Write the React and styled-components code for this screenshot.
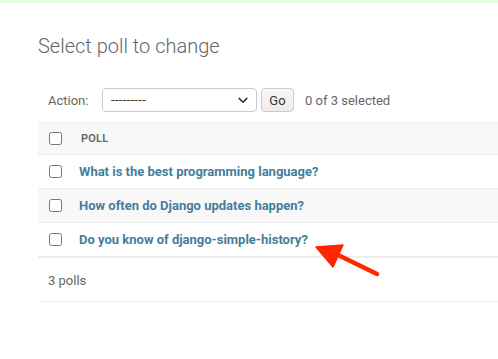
import React from 'react';
import styled, { createGlobalStyle } from 'styled-components';

const polls = [
    "What is the best programming language?",
    "How often do Django updates happen?",
    "Do you know of django-simple-history?",
]

export default function App(){

    return(
        <>
        <GlobalStyle/>
        <TopBar/>
        <Content>
            <Title>Select poll to change</Title>

            <Actions>
                <ActionLabel>Action:</ActionLabel>
                <SelectBox>
                    <span>---------</span>
                    <svg width="10" height="7" viewBox="0 0 10 7">
                        <path d="M1.2 1.4 L5 5.2 L8.8 1.4" fill="none" stroke="#333" strokeWidth="1.6" strokeLinecap="round" strokeLinejoin="round"/>
                    </svg>
                </SelectBox>
                <GoButton>Go</GoButton>
                <Counter>0 of 3 selected</Counter>
            </Actions>

            <Table>
                <thead>
                    <tr>
                        <CheckCell as="th" head><Check type="checkbox"/></CheckCell>
                        <HeadCell>Poll</HeadCell>
                    </tr>
                </thead>
                <tbody>
                    {polls.map((p, index) =>
                        <Row key={index} alt={index % 2 === 1}>
                            <CheckCell><Check type="checkbox"/></CheckCell>
                            <Cell><PollLink href="#">{p}</PollLink></Cell>
                        </Row>
                    )}
                </tbody>
            </Table>

            <Paginator>3 polls</Paginator>
        </Content>

        <Arrow width="80" height="40" viewBox="0 0 80 40">
            <path d="M67 34 L24 13" stroke="#ff2600" strokeWidth="4.5" strokeLinecap="round"/>
            <polygon points="6,7 33,5 23,27" fill="#ff2600" stroke="#ff2600" strokeWidth="1.5" strokeLinejoin="round"/>
        </Arrow>
        </>
    )

}

const GlobalStyle = createGlobalStyle`
    body {
        margin: 0;
        background: #fff;
        font-family: Roboto, "Liberation Sans", sans-serif;
        color: #333;
        overflow: hidden;
        position: relative;
    }
`

const TopBar = styled.div`
    height: 3px;
    background: #dfffdf;
`

const Content = styled.div`
    padding: 0 0 0 38px;
`

const Title = styled.h1`
    margin: 0;
    padding-top: 31px;
    font-size: 20px;
    font-weight: 300;
    line-height: 24px;
    color: #666;
`

const Actions = styled.div`
    display: flex;
    align-items: center;
    margin-top: 30px;
    height: 24px;
    padding-left: 10px;
    font-size: 13px;
    color: #666;
`

const ActionLabel = styled.span`
    width: 54px;
`

const SelectBox = styled.div`
    box-sizing: border-box;
    width: 155px;
    height: 24px;
    border: 1px solid #ccc;
    border-radius: 4px;
    display: flex;
    align-items: center;
    justify-content: space-between;
    padding: 0 8px 0 8px;
    color: #333;
    font-size: 13px;
    letter-spacing: 0.3px;
    span{
        margin-top: -2px;
    }
`

const GoButton = styled.div`
    box-sizing: border-box;
    margin-left: 4px;
    width: 33px;
    height: 24px;
    border: 1px solid #ccc;
    border-radius: 4px;
    background: linear-gradient(#f8f8f8, #ececec);
    display: flex;
    align-items: center;
    justify-content: center;
    color: #333;
    font-size: 13px;
`

const Counter = styled.span`
    margin-left: 11px;
    color: #666;
`

const Table = styled.table`
    margin-top: 10px;
    width: 100%;
    border-collapse: collapse;
    font-size: 13px;
`

const HeadCell = styled.th`
    text-align: left;
    background: #f8f8f8;
    border-top: 1px solid #eee;
    border-bottom: 1px solid #eee;
    padding: 0 0 0 2px;
    height: 31px;
    font-size: 11px;
    font-weight: 600;
    text-transform: uppercase;
    color: #666;
    letter-spacing: 0.2px;
`

const CheckCell = styled.td`
    width: 41px;
    height: ${props => props.head ? "31px" : "33px"};
    padding: 0 0 0 0;
    background: ${props => props.head ? "#f8f8f8" : "inherit"};
    border-top: ${props => props.head ? "1px solid #eee" : "none"};
    border-bottom: 1px solid #eee;
    vertical-align: middle;
`

const Check = styled.input`
    margin: 0 0 0 11px;
    width: 13px;
    height: 13px;
    display: block;
`

const Row = styled.tr`
    background: ${props => props.alt ? "#f8f8f8" : "#fff"};
`

const Cell = styled.td`
    padding: 0;
    border-bottom: 1px solid #eee;
`

const PollLink = styled.a`
    color: #447e9b;
    font-weight: 700;
    text-decoration: none;
`

const Paginator = styled.div`
    border-top: 1px solid #eee;
    border-bottom: 1px solid #eee;
    height: 43px;
    line-height: 45px;
    padding-left: 10px;
    font-size: 13px;
    color: #666;
`

const Arrow = styled.svg`
    position: absolute;
    left: 310px;
    top: 240px;
`
